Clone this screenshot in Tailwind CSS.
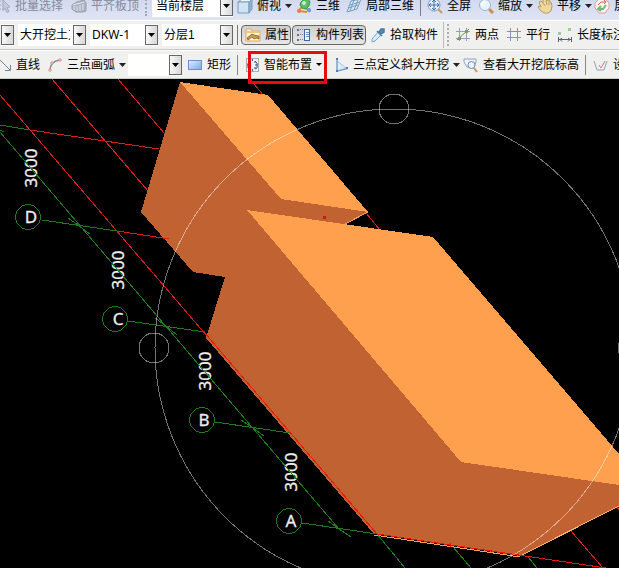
<!DOCTYPE html>
<html lang="zh-CN">

<head>
  <meta charset="UTF-8">
  <meta name="viewport" content="width=device-width, initial-scale=1.0">
  <title>大开挖土方 - 三维</title>
  <script src="https://cdn.jsdelivr.net/npm/@tailwindcss/browser@4"></script>
</head>

<body class="font-['Liberation_Sans','Noto_Sans_CJK_SC',sans-serif] text-xs text-black">
  <main class="relative flex h-screen flex-col overflow-hidden bg-black">

    <!-- === View toolbar (partly scrolled off the top) === -->
    <nav class="-mt-2 flex h-7 shrink-0 items-center overflow-hidden bg-linear-to-b from-[#cdd5ec] to-[#e0e5f5] whitespace-nowrap">
      <button class="flex shrink-0 items-center gap-1 text-[#858b9b]">
        <svg class="h-4 w-[11px]" viewBox="5 0 11 16" fill="none" stroke="#a4abba">
          <path d="M5 3h4M5 7h3M5 11h4" stroke-dasharray="1 1" />
          <path d="M8 2l7 7-3 .500 2 4-2 1-2-4-2 2z" fill="#c5cad6" />
        </svg>
        批量选择
      </button>
      <button class="ml-2 flex shrink-0 items-center gap-1 text-[#858b9b]">
        <svg class="h-4 w-4" viewBox="0 0 16 16" fill="#adb3c1" stroke="#959cab">
          <path d="M1 7l5-3 7-2 2 3v8l-3 1-7 0-4-3z" />
          <path d="M3 8v4M6 8v5M9 7v6M12 6v6M2 7l11-3" fill="none" stroke="#e5e8f1" />
        </svg>
        平齐板顶
      </button>
      <span class="ml-1.5 h-5 w-[3px] shrink-0 border-l-2 border-dotted border-[#a0a6b6]"></span>
      <div class="relative ml-1 w-[81px] shrink-0">
        <select aria-label="楼层" class="h-[22px] w-full appearance-none bg-white pl-1 outline-none">
          <option>当前楼层</option>
        </select>
        <span class="pointer-events-none absolute inset-y-px right-0 flex w-[13px] items-center justify-center border border-[#666] bg-linear-to-r from-[#f8f8f8] to-[#d8d8d8]">
          <svg class="h-1 w-[7px]" viewBox="0 0 7 4"><path d="M0 0h7L3.500 4z" /></svg>
        </span>
      </div>
      <button class="ml-1 flex shrink-0 items-center gap-1">
        <svg class="h-4 w-4" viewBox="0 0 16 16" stroke="#7d9cb8">
          <path d="M1 4l4-3h10l-3 3z" fill="#eef7fd" />
          <path d="M1 4h11v11H1z" fill="#cfe4f3" />
          <path d="M12 4l3-3v10l-3 4z" fill="#8db2d0" />
        </svg>
        俯视
        <svg class="h-1 w-[7px]" viewBox="0 0 7 4"><path d="M0 0h7L3.500 4z" fill="#222" /></svg>
      </button>
      <button class="ml-1 flex shrink-0 items-center gap-1">
        <svg class="h-4 w-4" viewBox="0 0 16 16" fill="none">
          <path d="M9 9l5 5M7 8l-5 5M3 13l8 1" stroke="#d4922d" stroke-width="2" />
          <path d="M5 4l3-3 4 0 2 3-1 4-3 3-4-1-2-3z" fill="#5dbd66" stroke="#3b9551" />
          <circle cx="8" cy="5" r="2" fill="#c9f1c6" />
          <circle cx="13" cy="12" r="2" fill="#6c96dc" />
          <circle cx="3" cy="13" r="2" fill="#e77b52" />
        </svg>
        三维
      </button>
      <button class="ml-1.5 flex shrink-0 items-center gap-1">
        <svg class="h-4 w-4" viewBox="0 0 16 16" fill="#d5e7f6" stroke="#7a9dc0">
          <path d="M5 3l10-2-4 10-10 3z" />
          <path d="M8 2L4 13M12 2L8 12M4 7l10-3M2 10l10-3" />
        </svg>
        局部三维
      </button>
      <span class="ml-1.5 h-5 w-px shrink-0 bg-[#777d8b]"></span>
      <button class="ml-1.5 flex shrink-0 items-center gap-1">
        <svg class="h-4 w-4" viewBox="0 0 16 16" fill="none">
          <path d="M11 11l4 4" stroke="#cf9654" stroke-width="2" />
          <circle cx="7" cy="7" r="6" fill="#e4f0fb" stroke="#8198b9" />
          <path d="M7 2v10M2 7h10M5 4l2-2 2 2M5 10l2 2 2-2M4 5L2 7l2 2M10 5l2 2-2 2" stroke="#4470a8" />
        </svg>
        全屏
      </button>
      <button class="ml-[7px] flex shrink-0 items-center gap-1">
        <svg class="h-4 w-4" viewBox="0 0 16 16" fill="none">
          <path d="M11 11l4 4" stroke="#c89048" stroke-width="3" />
          <circle cx="7" cy="7" r="5.500" fill="#e8f5fe" stroke="#9db3cc" />
          <path d="M4 7a3 3 0 0 1 3-3" stroke="#fff" stroke-width="2" />
        </svg>
        缩放
        <svg class="h-1 w-[7px]" viewBox="0 0 7 4"><path d="M0 0h7L3.500 4z" fill="#222" /></svg>
      </button>
      <button class="ml-1 flex shrink-0 items-center gap-1">
        <svg class="h-4 w-4" viewBox="0 0 16 16" fill="#efd99a" stroke="#b89c60">
          <path d="M2 4l2-1 2 2 0-3 2-1 2 2 2-1 1 2 1 0 1 4-1 5-3 2H7l-4-3-2-3 1-1 2 1z" />
          <path d="M6 5l2 3M9 3l1 4M12 4l0 3" fill="none" />
        </svg>
        平移
        <svg class="h-1 w-[7px]" viewBox="0 0 7 4"><path d="M0 0h7L3.500 4z" fill="#222" /></svg>
      </button>
      <button class="ml-0.5 flex shrink-0 items-center gap-1">
        <svg class="h-4 w-4" viewBox="0 0 16 16" fill="none">
          <path d="M1 5l4-4h6l4 4v5l-4 5H5l-4-5z" fill="#fbf3f0" stroke="#e39d95" />
          <path d="M4 7l3-3h4M10 2l2 2-2 2" stroke="#dc6054" />
          <path d="M12 7l-3 4H5M7 8l-3 3 3 2" stroke="#73b87d" stroke-width="2" />
        </svg>
        屏幕旋转
      </button>
    </nav>

    <!-- === Component toolbar === -->
    <nav class="flex h-[30px] shrink-0 items-center overflow-hidden border-t border-b border-t-white border-b-[#c9c9c9] bg-[#f0f0ef] whitespace-nowrap">
      <div class="relative ml-px w-[13px] shrink-0">
        <select aria-label="构件类别" class="h-[22px] w-full appearance-none bg-white outline-none">
          <option></option>
        </select>
        <span class="pointer-events-none absolute inset-y-px right-0 flex w-[13px] items-center justify-center border border-[#666] bg-linear-to-r from-[#f8f8f8] to-[#d8d8d8]">
          <svg class="h-1 w-[7px]" viewBox="0 0 7 4"><path d="M0 0h7L3.500 4z" /></svg>
        </span>
      </div>
      <div class="relative ml-1 w-[68px] shrink-0">
        <select aria-label="构件类型" class="h-[22px] w-full appearance-none overflow-hidden bg-white pr-4 pl-0.5 outline-none">
          <option>大开挖土方</option>
        </select>
        <span class="pointer-events-none absolute inset-y-px right-0 flex w-[13px] items-center justify-center border border-[#666] bg-linear-to-r from-[#f8f8f8] to-[#d8d8d8]">
          <svg class="h-1 w-[7px]" viewBox="0 0 7 4"><path d="M0 0h7L3.500 4z" /></svg>
        </span>
      </div>
      <div class="relative ml-1 w-[68px] shrink-0">
        <select aria-label="构件名称" class="h-[22px] w-full appearance-none bg-white pl-0.5 font-['Noto_Sans',sans-serif] outline-none">
          <option>DKW-1</option>
        </select>
        <span class="pointer-events-none absolute inset-y-px right-0 flex w-[13px] items-center justify-center border border-[#666] bg-linear-to-r from-[#f8f8f8] to-[#d8d8d8]">
          <svg class="h-1 w-[7px]" viewBox="0 0 7 4"><path d="M0 0h7L3.500 4z" /></svg>
        </span>
      </div>
      <div class="relative ml-1 w-[71px] shrink-0">
        <select aria-label="分层" class="h-[22px] w-full appearance-none bg-white pl-0.5 outline-none">
          <option>分层1</option>
        </select>
        <span class="pointer-events-none absolute inset-y-px right-0 flex w-[13px] items-center justify-center border border-[#666] bg-linear-to-r from-[#f8f8f8] to-[#d8d8d8]">
          <svg class="h-1 w-[7px]" viewBox="0 0 7 4"><path d="M0 0h7L3.500 4z" /></svg>
        </span>
      </div>
      <span class="ml-1 h-5 w-px shrink-0 bg-[#777]"></span>
      <button aria-pressed="true" class="ml-[3px] flex h-5 shrink-0 items-center gap-1 rounded-sm border border-[#666] bg-linear-to-b from-[#d0d0d0] to-[#e6e6e6] pr-px pl-[3px]">
        <svg class="h-4 w-4" viewBox="0 0 16 16">
          <path d="M1 2h5l1 2h8v10H1z" fill="#fff6e0" stroke="#e0a860" />
          <path d="M1 4h14v2H1z" fill="#f6c27a" />
          <path d="M2 11l5-4 2 1 5 1v3l-3-1-2 1-2-2-4 3z" fill="#cda23d" stroke="#69501f" stroke-width=".700" />
        </svg>
        属性
      </button>
      <button aria-pressed="true" class="ml-px flex h-5 shrink-0 items-center gap-1 rounded-sm border border-[#666] bg-linear-to-b from-[#d0d0d0] to-[#e6e6e6] pr-px pl-[3px]">
        <svg class="h-4 w-4" viewBox="0 0 16 16" fill="none" shape-rendering="crispEdges">
          <path d="M1 2h2v2H1zM1 7h2v2H1zM1 12h2v2H1z" fill="#5a74a8" />
          <path d="M4 2.500h4M4 7.500h4M4 12.500h4" stroke="#6e7fa4" stroke-dasharray="1 1" />
          <rect x="8.500" y="2.500" width="5" height="11" fill="#f0f5ff" stroke="#4264ad" />
          <path d="M10 5.500h3M10 7.500h3M10 9.500h3" stroke="#6d92d8" />
        </svg>
        构件列表
      </button>
      <button class="ml-1 flex shrink-0 items-center gap-1">
        <svg class="h-4 w-4" viewBox="0 0 16 16">
          <path d="M8 5l3 3-6 6-3 1 0-3z" fill="#d4ecfb" stroke="#7ba3c6" />
          <path d="M7 4l5 5M9 5l2-3 3 0 0 3-3 2z" fill="#5588b8" stroke="#4d7ba9" stroke-width="1.500" />
        </svg>
        拾取构件
      </button>
      <span class="ml-[5px] h-[26px] w-px shrink-0 bg-[#bbb]"></span>
      <span class="ml-[3px] h-[22px] w-[3px] shrink-0 border-l-2 border-dotted border-[#aaa]"></span>
      <button class="ml-[5px] flex shrink-0 items-center gap-1">
        <svg class="h-4 w-4" viewBox="0 0 16 16" fill="none">
          <path d="M4.500 1v13M11.500 1v13M1 4.500h14M1 11.500h14" stroke="#949ebd" />
          <path d="M2 13L14 2" stroke="#6b8a56" />
          <path d="M3 10h3v3H3zM10 3h3v3h-3z" fill="#7c9868" />
        </svg>
        两点
      </button>
      <button class="ml-[7px] flex shrink-0 items-center gap-1">
        <svg class="h-4 w-4" viewBox="0 0 16 16" fill="none">
          <path d="M4.500 1v13M11.500 1v13" stroke="#8793bd" />
          <path d="M1 10.500h14" stroke="#8793bd" />
          <path d="M1 4.500h14" stroke="#cf7774" />
        </svg>
        平行
      </button>
      <button class="ml-[7px] flex shrink-0 items-center gap-1">
        <svg class="h-4 w-4" viewBox="0 0 16 16" fill="none">
          <path d="M1 5h3v3H1zM11 1h3v3h-3z" fill="#9ccba0" />
          <path d="M1.500 10v5M14.500 10v5M2 12.500h12M5 11l-2 1.500 2 2M11 11l2 1.500-2 2" stroke="#555f70" />
        </svg>
        长度标注
      </button>
    </nav>

    <!-- === Drawing toolbar === -->
    <nav class="flex h-[29px] shrink-0 items-center overflow-hidden border-t border-b border-t-white border-b-[#c8d0cc] bg-[#f0f0ef] whitespace-nowrap">
      <button class="flex shrink-0 items-center gap-1">
        <svg class="h-4 w-3" viewBox="4 0 12 16" fill="none" stroke="#6c87a6">
          <path d="M4 3l10 10M9 13.500h5.500V8" />
        </svg>
        直线
      </button>
      <button class="ml-[7px] flex shrink-0 items-center gap-1">
        <svg class="h-4 w-4" viewBox="0 0 16 16" fill="none">
          <path d="M3 14Q3 4 13 3" stroke="#7c8da3" stroke-width="1.500" />
          <path d="M2 12h2v2H2zM4 5h2v2H4zM12 2h2v2h-2z" fill="#fff" stroke="#e08a7c" />
        </svg>
        三点画弧
        <svg class="h-1 w-[7px]" viewBox="0 0 7 4"><path d="M0 0h7L3.500 4z" fill="#222" /></svg>
      </button>
      <div class="relative ml-0.5 w-[54px] shrink-0">
        <select aria-label="画弧方式" class="h-[22px] w-full appearance-none bg-white outline-none">
          <option></option>
        </select>
        <span class="pointer-events-none absolute inset-y-px right-0 flex w-[13px] items-center justify-center border border-[#666] bg-linear-to-r from-[#f8f8f8] to-[#d8d8d8]">
          <svg class="h-1 w-[7px]" viewBox="0 0 7 4"><path d="M0 0h7L3.500 4z" /></svg>
        </span>
      </div>
      <button class="ml-[5px] flex shrink-0 items-center gap-1">
        <svg class="h-4 w-4" viewBox="0 0 16 16">
          <defs>
            <linearGradient id="rect-fill" x2="1" y2="1">
              <stop stop-color="#e4efff" />
              <stop offset="1" stop-color="#7da4ea" />
            </linearGradient>
          </defs>
          <rect x="1.500" y="3.500" width="13" height="9" fill="url(#rect-fill)" stroke="#6d8ed0" />
        </svg>
        矩形
      </button>
      <span class="ml-1.5 h-5 w-px shrink-0 bg-[#888]"></span>
      <button class="ml-1.5 flex shrink-0 items-center gap-1">
        <svg class="h-4 w-4" viewBox="0 0 16 16" fill="none">
          <rect x="2.500" y="1.500" width="12" height="13" stroke="#566a91" stroke-dasharray="1 1" />
          <path d="M6 4L4 6v5l2 1M11 4l2 2v5l-2 1M6 4v2M11 4v2M6 12v-2M11 12v-2" stroke="#4a5a75" />
          <path d="M3 8h3M11 8h3M8.500 2v2M8.500 12v2" stroke="#445977" />
        </svg>
        智能布置
        <svg class="h-1 w-[7px]" viewBox="0 0 7 4"><path d="M0 0h6L3 3z" /></svg>
      </button>
      <button class="ml-2.5 flex shrink-0 items-center gap-1">
        <svg class="h-4 w-4" viewBox="0 0 16 16">
          <path d="M4 4l9 7-9 3z" fill="#dfebf7" stroke="#a6c1de" />
          <path d="M4 2v12M3 14.500l12-3" stroke="#6a90bd" fill="none" />
          <path d="M3 1h2v2H3zM13 10h2v2h-2zM3 13h2v2H3z" fill="#4d7db8" />
        </svg>
        三点定义斜大开挖
        <svg class="h-1 w-[7px]" viewBox="0 0 7 4"><path d="M0 0h7L3.500 4z" fill="#222" /></svg>
      </button>
      <button class="ml-[3px] flex shrink-0 items-center gap-1">
        <svg class="h-4 w-4" viewBox="0 0 16 16" fill="none">
          <path d="M1 2h12v3l-2 5H4L1 5z" fill="#eff4fb" stroke="#8ba2c8" />
          <path d="M11 11l3 4" stroke="#c99657" stroke-width="2" />
          <circle cx="8.500" cy="8" r="3.500" fill="#e6f5ff" stroke="#7288a8" />
        </svg>
        查看大开挖底标高
      </button>
      <span class="ml-1.5 h-5 w-px shrink-0 bg-[#888]"></span>
      <button class="ml-[7px] flex shrink-0 items-center gap-1">
        <svg class="h-4 w-4" viewBox="0 0 16 16" fill="none">
          <path d="M1 4l3 9h7l3-9" stroke="#89a3c8" />
          <path d="M6 8l2 3 4-7" stroke="#d98070" />
        </svg>
        设置
      </button>
    </nav>

    <!-- === 3D view === -->
    <section aria-label="三维视图" class="min-h-0 flex-1 overflow-hidden">
      <svg class="h-full w-full" viewBox="0 79 619 489" preserveAspectRatio="xMinYMin slice" fill="none" shape-rendering="crispEdges">
        <!-- grid lines behind the pits -->
        <g stroke="#d81f1a">
          <path d="M0 95L207 336M52 79L160 205M118 79L176 147M250 79L263 95M30 130L159 149" />
          <path d="M366 213L380 230M570 530L603 568M616 506L619 510" />
        </g>

        <!-- upper pit -->
        <path d="M180 82L281 199L368 212L345 224L300 240L240 290L225 277L193 272L141 212z" fill="#c16232" />
        <path d="M180 82L268 95L368 212L281 199z" fill="#ffa04f" />
        <path d="M345 224L368 212" stroke="#ffa04f" />

        <!-- lower pit -->
        <path d="M247 210L461 462L619 485V506L520 556L374 534L206 338L225 277z" fill="#c16232" />
        <path d="M247 210L433 237L619 454V485L461 462z" fill="#ffa04f" />
        <path d="M520 556L619 506" stroke="#ffb366" />
        <path d="M374 535L520 557" stroke="#ffa04f" />

        <path d="M117 231L169 239M204 332L377 534L606 568M450 543V547" stroke="#f01408" />
        <rect x="323" y="216" width="3" height="3" fill="#e01010" />

        <!-- axis and dimension lines -->
        <g stroke="#1d7d1d">
          <path d="M0 125L30 130M42 220L117 231M128 321L205 332M215 422L290 433M302 523L377 534" />
          <path d="M377 534L405 568M453 547L471 568M528 557L537 568" />
          <path d="M0 130L4 132M68 218L78 225L90 234M155 318L166 326L177 335M241 420L253 428L264 436M328 521L339 529L351 537" />
          <path d="M28 204L34 206L39 211L41 217L39 223L34 228L28 230L22 228L17 223L15 217L17 211L22 206z" />
          <path d="M115 306L121 308L126 313L128 319L126 325L121 330L115 332L109 330L104 325L102 319L104 313L109 308z" />
          <path d="M202 407L208 409L213 414L215 420L213 426L208 431L202 433L196 431L191 426L189 420L191 414L196 409z" />
          <path d="M289 508L295 510L300 515L302 521L300 527L295 532L289 534L283 532L278 527L276 521L278 515L283 510z" />
        </g>

        <g class="font-['Noto_Sans',sans-serif] text-[17px]" fill="#eee" stroke="#eee" stroke-width=".300" text-anchor="middle">
          <text x="31" y="223">D</text>
          <text x="118" y="325">C</text>
          <text x="204" y="426">B</text>
          <text x="291" y="527">A</text>
          <text transform="translate(37 168) rotate(-90)">3000</text>
          <text transform="translate(124 270) rotate(-90)">3000</text>
          <text transform="translate(211 371) rotate(-90)">3000</text>
          <text transform="translate(297 472) rotate(-90)">3000</text>
        </g>
        <path d="M0 132L339 529" stroke="#1d7d1d" />

        <!-- orbit handle -->
        <g stroke="#fff" stroke-opacity=".45">
          <circle cx="394" cy="348" r="239" />
          <circle cx="394" cy="109" r="15" />
          <circle cx="154" cy="348" r="15" />
          <circle cx="633" cy="348" r="15" />
        </g>
      </svg>
    </section>

    <!-- highlight around 智能布置 -->
    <div class="pointer-events-none absolute top-[51px] left-[248px] h-[33px] w-[79px] border-[3px] border-[#e60b0e]"></div>
  </main>
</body>

</html>
